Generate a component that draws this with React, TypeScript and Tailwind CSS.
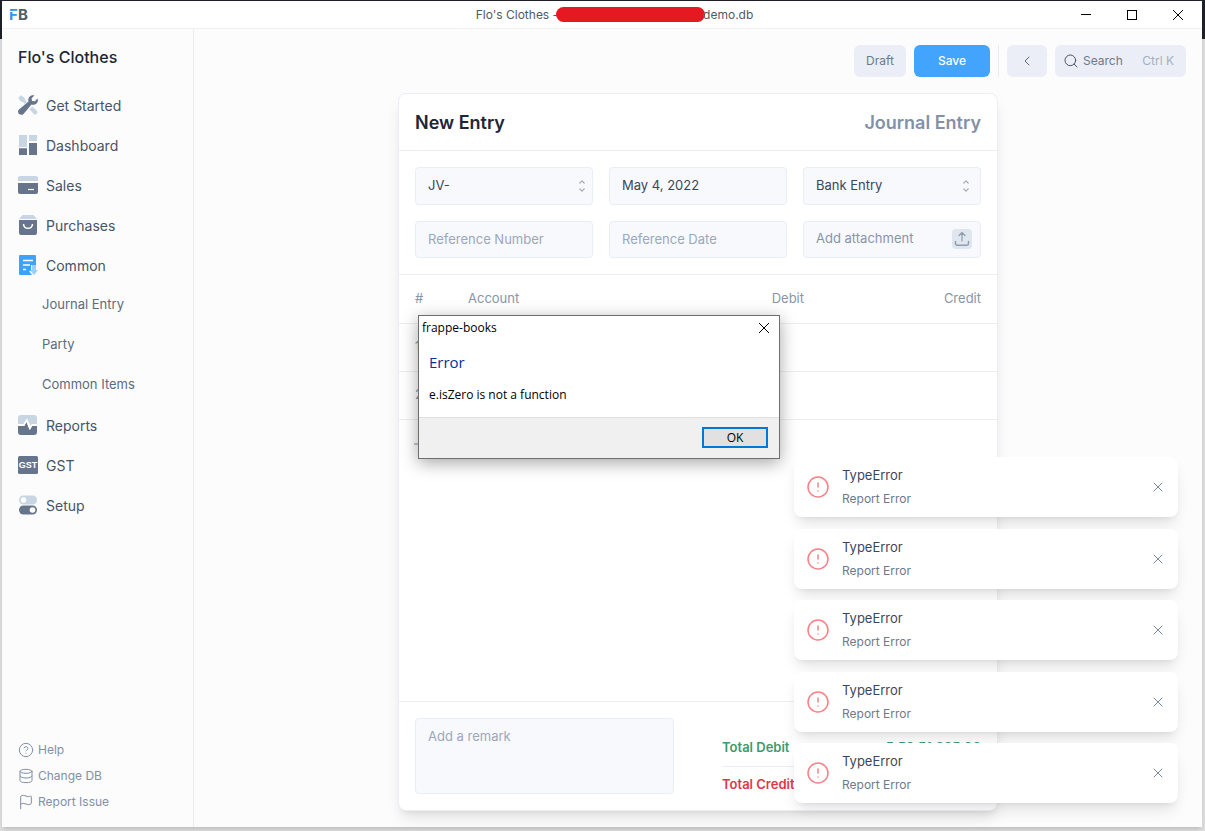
import React from 'react';
import {
  ChevronLeft,
  CircleAlert,
  CircleQuestionMark,
  Database,
  Flag,
  Plus,
  Search,
  X,
} from 'lucide-react';

const DARK = '#66758b';
const LIGHT = '#c8d5e2';

function ToolsIcon() {
  return (
    <svg viewBox="0 0 20 20" className="w-5 h-5">
      <path d="M0.3 2.8 2.8 0.3 6.6 2.7 6.9 4.8 9 6.9 6.9 9 4.8 6.9 2.7 6.6z" fill={LIGHT} />
      <path d="M11.5 14.2 14.2 11.5 18.9 15.8a2.2 2.2 0 0 1-3.1 3.1z" fill={LIGHT} />
      <path
        d="M19.6 3.6 16.8 6.3 14 5.9 13.6 3.2 16.4 0.5C13.6-.4 10.2 1.6 10.3 5.2c0 .6.1 1 .2 1.4L1 14.4c-3 3 1.4 7.2 4.5 4.500L13.5 9.6c.6.2 1 .2 1.500.2 3.600 0 5.600-3.300 4.600-6.200z"
        fill={DARK}
      />
    </svg>
  );
}

function DashboardIcon() {
  return (
    <svg viewBox="0 0 20 20" className="w-5 h-5">
      <path d="M1 0h8v12H1zM11 0h8v6h-8z" fill={LIGHT} />
      <path d="M1 13.300h8V20H1zM11 8h8v12h-8z" fill={DARK} />
    </svg>
  );
}

function SalesIcon() {
  return (
    <svg viewBox="0 0 20 20" className="w-5 h-5">
      <path d="M2 1h16a2 2 0 0 1 2 2v3H0V3a2 2 0 0 1 2-2z" fill={LIGHT} />
      <path d="M0 8h20v9a2 2 0 0 1-2 2H2a2 2 0 0 1-2-2z" fill={DARK} />
      <path d="M10 14.500h6" stroke="#fff" strokeWidth="1.200" />
    </svg>
  );
}

function PurchasesIcon() {
  return (
    <svg viewBox="0 0 20 20" className="w-5 h-5">
      <path d="M4.500 0h11L19 4H1z" fill={LIGHT} />
      <path d="M1 5h18v13a2 2 0 0 1-2 2H3a2 2 0 0 1-2-2z" fill={DARK} />
      <path d="M5.500 9c.4 5.800 8.600 5.800 9 0" fill="none" stroke="#fff" strokeWidth="1.500" />
    </svg>
  );
}

function CommonIcon() {
  return (
    <svg viewBox="0 0 20 20" className="w-5 h-5">
      <path d="M2 0h15a1 1 0 0 1 1 1v9h-5v6h-2l3 4H2a1 1 0 0 1-1-1V1a1 1 0 0 1 1-1z" fill="#3ea2fb" />
      <path d="M5 5.500h10M5 10h7M5 14.500h3" stroke="#fff" strokeWidth="1.500" />
      <path d="M14 10h4v5h2l-4 5-4-5h2z" fill="#9acffb" />
    </svg>
  );
}

function ReportsIcon() {
  return (
    <svg viewBox="0 0 20 20" className="w-5 h-5">
      <path d="M3 0h13a3 3 0 0 1 3 3v6h-4.600l-1.900 1.500L9 3.500 5.500 9H0V3a3 3 0 0 1 3-3z" fill={LIGHT} />
      <path d="M0 11h6.300L8.500 7l3 8 2.600-4H19v6a3 3 0 0 1-3 3H3a3 3 0 0 1-3-3z" fill={DARK} />
      <path d="M0 10h6l2.500-5L12 13.500l2-3.500h5" fill="none" stroke="#fff" strokeWidth="1.300" />
    </svg>
  );
}

function GstIcon() {
  return (
    <svg viewBox="0 0 20 20" className="w-5 h-5">
      <rect y="1" width="20" height="18" rx="1.500" fill={DARK} />
      <text
        x="10"
        y="13"
        textAnchor="middle"
        fill="#fff"
        className="text-[9px] font-bold font-['Liberation_Sans_Narrow','Liberation_Sans',sans-serif]"
      >
        GST
      </text>
    </svg>
  );
}

function SetupIcon() {
  return (
    <svg viewBox="0 0 20 20" className="w-5 h-5">
      <rect x="1" y="0.500" width="18" height="9" rx="4.500" fill={LIGHT} />
      <circle cx="5.500" cy="5" r="2.800" fill="#fff" />
      <rect x="1" y="10.500" width="18" height="9" rx="4.500" fill={DARK} />
      <circle cx="14.500" cy="15" r="2.800" fill="#fff" />
    </svg>
  );
}

const navItems = [
  { label: 'Get Started', icon: <ToolsIcon /> },
  { label: 'Dashboard', icon: <DashboardIcon /> },
  { label: 'Sales', icon: <SalesIcon /> },
  { label: 'Purchases', icon: <PurchasesIcon /> },
  { label: 'Common', icon: <CommonIcon />, children: ['Journal Entry', 'Party', 'Common Items'] },
  { label: 'Reports', icon: <ReportsIcon /> },
  { label: 'GST', icon: <GstIcon /> },
  { label: 'Setup', icon: <SetupIcon /> },
];

const footerLinks = [
  { label: 'Help', Icon: CircleQuestionMark },
  { label: 'Change DB', Icon: Database },
  { label: 'Report Issue', Icon: Flag },
];

function TitleBar() {
  return (
    <header className="flex items-center h-7 shrink-0 bg-white border-b border-[#f0f1f4]">
      <div className="w-[164px] pl-1.5">
        <svg viewBox="0 0 24 24" className="w-6 h-6" role="img" aria-label="Frappe Books">
          <text x="1" y="17" fill="#2f95f3" className="text-[15px] font-bold font-[Inter,sans-serif]">F</text>
          <text x="10" y="17" fill="#505c68" className="text-[15px] font-bold font-[Inter,sans-serif]">B</text>
          <path d="M1 8.500h8.500" stroke="#fff" />
        </svg>
      </div>
      <div className="flex-1 flex items-center justify-center text-xs text-[#505a66]">
        <span>Flo's Clothes -</span>
        <span className="w-[149px] h-[15px] -mx-0.5 rounded-full bg-[#e61923]" />
        <span>demo.db</span>
      </div>
      <div className="flex mr-px">
        <button aria-label="Minimize" className="w-[46px] h-7 flex items-center justify-center">
          <span className="w-2.5 h-px bg-black" />
        </button>
        <button aria-label="Maximize" className="w-[46px] h-7 flex items-center justify-center">
          <span className="w-2.5 h-2.5 border border-black" />
        </button>
        <button aria-label="Close" className="w-[46px] h-7 flex items-center justify-center">
          <svg viewBox="0 0 10 10" className="w-2.5 h-2.5">
            <path d="M0 0l10 10M10 0L0 10" stroke="#000" />
          </svg>
        </button>
      </div>
    </header>
  );
}

function Sidebar() {
  return (
    <aside className="w-48 shrink-0 flex flex-col border-r border-[#ebecf0] text-[#475467]">
      <h2 className="px-4 pt-4 pb-[17px] text-base leading-6 font-medium text-[#1d2536]">Flo's Clothes</h2>
      <nav>
        {navItems.map((item) => (
          <React.Fragment key={item.label}>
            <a href="#" className="flex items-center gap-2 h-10 px-4 text-sm">
              <span className="pb-0.5">{item.icon}</span>
              <span>{item.label}</span>
            </a>
            {item.children?.map((child) => (
              <a key={child} href="#" className="flex items-center h-10 pl-10 pb-0.5 text-[13px] text-[#5d6b7e]">
                {child}
              </a>
            ))}
          </React.Fragment>
        ))}
      </nav>
      <div className="mt-auto px-4 pb-3">
        {footerLinks.map(({ label, Icon }) => (
          <a key={label} href="#" className="flex items-center gap-1 h-[26px] text-xs text-[#8190a5]">
            <Icon className="w-4 h-4" strokeWidth={1.5} />
            <span>{label}</span>
          </a>
        ))}
      </div>
    </aside>
  );
}

function Toolbar() {
  return (
    <div className="flex justify-end items-center gap-2 px-4 pt-4 text-xs text-[#6c7a8c]">
      <span className="h-8 px-3 flex items-center rounded-md bg-[#ebeef6]">Draft</span>
      <button className="h-8 px-6 rounded-md bg-[#42a4fc] text-white font-medium">Save</button>
      <div className="w-px h-8 bg-[#e8ebf1]" />
      <button aria-label="Back" className="w-10 h-8 flex items-center justify-center rounded-md bg-[#ebeef6] text-[#5c6a7d]">
        <ChevronLeft className="w-4 h-4" strokeWidth={1.5} />
      </button>
      <button className="w-[131px] h-8 pl-2 pr-3 flex items-center rounded-md bg-[#ebeef6]">
        <Search className="w-4 h-4 mr-1 text-[#475467]" strokeWidth={1.5} />
        <span>Search</span>
        <span className="ml-auto text-[#a3b0c2]">Ctrl K</span>
      </button>
    </div>
  );
}

const fieldClass =
  'w-full px-3 rounded-[4px] border border-[#e9edf5] bg-[#f7f9fd] text-[13px] text-[#3b475a] placeholder:text-[#9ba8bb] outline-none appearance-none';

function SelectField({ label, value, arrowClass }: { label: string; value: string; arrowClass: string }) {
  return (
    <div className="relative">
      <select aria-label={label} defaultValue={value} className={`${fieldClass} h-[38px]`}>
        <option>{value}</option>
      </select>
      <svg viewBox="0 0 6 12" className={`absolute top-3 w-1.5 h-3.5 text-[#a0adbf] pointer-events-none ${arrowClass}`}>
        <path d="M.8 3 3 .8 5.200 3M.8 9 3 11.200 5.200 9" fill="none" stroke="currentColor" strokeWidth="1.200" strokeLinecap="round" strokeLinejoin="round" />
      </svg>
    </div>
  );
}

function EntryForm() {
  return (
    <section className="w-[600px] flex-1 flex flex-col mx-auto mt-4 mb-4 bg-white border border-[#ebeef4] rounded-lg shadow-lg text-[13px]">
      <div className="flex items-center justify-between h-[57px] px-4 pt-0.5 border-b border-[#ebeef6] text-lg font-semibold">
        <h1 className="text-[#1d2536]">New Entry</h1>
        <h2 className="text-[#8291a8]">Journal Entry</h2>
      </div>

      {/* Entry fields */}
      <div className="grid grid-cols-3 gap-4 p-4 border-b border-[#ebeef6]">
        <SelectField label="Number series" value="JV-" arrowClass="right-2" />
        <input aria-label="Date" defaultValue="May 4, 2022" className={`${fieldClass} h-[38px] pb-0.5`} />
        <SelectField label="Entry type" value="Bank Entry" arrowClass="right-3" />
        <input aria-label="Reference Number" placeholder="Reference Number" className={`${fieldClass} h-[37px] pb-0.5`} />
        <input aria-label="Reference Date" placeholder="Reference Date" className={`${fieldClass} h-[37px] pb-0.5`} />
        <button className="w-full h-[37px] pl-3 pr-2 pb-0.5 flex items-center justify-between rounded-[4px] border border-[#e9edf5] bg-[#f7f9fd] text-[#8795a9]">
          <span>Add attachment</span>
          <span className="w-5 h-5 flex items-center justify-center rounded bg-[#dfe6ee]">
            <svg viewBox="0 0 16 16" className="w-4 h-4" fill="none" stroke="#8f9db1" strokeLinecap="round" strokeLinejoin="round">
              <path d="M8 10V1.800M5 4.500l3-3 3 3" strokeWidth="1.200" />
              <path d="M1.500 10.500v2a1.700 1.700 0 0 0 1.700 1.700h9.600a1.700 1.700 0 0 0 1.700-1.700v-2" strokeWidth="1.500" />
            </svg>
          </span>
        </button>
      </div>

      {/* Accounts */}
      <table className="w-full table-fixed text-[#8795a9]">
        <thead>
          <tr className="h-12 border-b border-[#ebeef6]">
            <th className="w-[69px] pl-4 text-left font-normal">#</th>
            <th className="text-left font-normal">Account</th>
            <th className="w-[162px] text-right font-normal">Debit</th>
            <th className="w-[193px] pr-4 text-right font-normal">Credit</th>
          </tr>
        </thead>
        <tbody>
          {[1, 2].map((n) => (
            <tr key={n} className="h-12 border-b border-[#ebeef6]">
              <td className="pl-4">{n}</td>
              <td />
              <td />
              <td />
            </tr>
          ))}
        </tbody>
      </table>
      <button className="h-12 pl-3 flex items-center gap-2 text-[#8795a9]">
        <Plus className="w-4 h-4" strokeWidth={1.5} />
        <span className="ml-7">Add Row</span>
      </button>

      {/* Remark and totals */}
      <div className="grid grid-cols-2 gap-12 mt-auto p-4 border-t border-[#ebeef6]">
        <textarea aria-label="Remark" placeholder="Add a remark" className={`${fieldClass} h-[76px] py-2 resize-none`} />
        <div className="flex flex-col justify-end leading-5 font-semibold">
          <div className="flex justify-between pb-[9px] border-b border-[#ebeef6] text-[#3d9b6c]">
            <span>Total Debit</span>
            <span>5,50,51,395.00</span>
          </div>
          <div className="flex justify-between pt-[7px] text-[#e0364a]">
            <span>Total Credit</span>
          </div>
        </div>
      </div>
    </section>
  );
}

function Toast() {
  return (
    <div className="flex items-center h-[60px] px-3 rounded-lg bg-white shadow-lg">
      <CircleAlert className="w-6 h-6 mr-3 text-[#f98086]" strokeWidth={1.5} />
      <div className="flex flex-col items-start gap-1 leading-5">
        <p className="text-[13px] text-[#3b475a]">TypeError</p>
        <button className="text-xs leading-5 text-[#6c7a8c]">Report Error</button>
      </div>
      <button aria-label="Dismiss" className="ml-auto text-[#7888a0]">
        <X className="w-4 h-4" strokeWidth={1.5} />
      </button>
    </div>
  );
}

function ErrorDialog() {
  return (
    <div
      role="dialog"
      aria-label="frappe-books"
      className="absolute left-[418px] top-[315px] w-[362px] bg-white border border-[#6e6e6e] shadow-[0_4px_16px_rgba(0,0,0,0.35)] text-xs text-black font-['Open_Sans','Noto_Sans',sans-serif]"
    >
      <div className="flex items-center justify-between h-6 pl-[3px] pr-2.5">
        <span>frappe-books</span>
        <button aria-label="Close dialog">
          <svg viewBox="0 0 10 10" className="w-2.5 h-2.5">
            <path d="M0 0l10 10M10 0L0 10" stroke="#000" />
          </svg>
        </button>
      </div>
      <div className="px-2.5 pt-2.5 pb-[13px]">
        <h3 className="text-[15px] leading-6 text-[#003399]">Error</h3>
        <p className="mt-3 leading-[18px]">e.isZero is not a function</p>
      </div>
      <div className="flex items-start justify-end h-[41px] pt-[9px] pr-[11px] bg-[#f0f0f0] border-t border-[#dfdfdf]">
        <button className="w-[66px] h-[21px] leading-4 bg-[#e1e1e1] border-2 border-[#0078d7]">OK</button>
      </div>
    </div>
  );
}

export default function App() {
  return (
    <div className="relative min-h-screen flex pt-px pl-[2px] pr-[3px] pb-1 bg-[linear-gradient(#1e2127_39px,#dedede_39px)] font-[Inter,sans-serif]">
      <div className="relative flex-1 flex flex-col bg-[#fcfcfc] shadow-md">
        <TitleBar />
        <div className="flex-1 flex">
          <Sidebar />
          <main className="flex-1 flex flex-col">
            <Toolbar />
            <EntryForm />
          </main>
        </div>
        <div className="absolute right-6 bottom-6 w-96 h-[346px] flex flex-col justify-between">
          {[1, 2, 3, 4, 5].map((id) => (
            <Toast key={id} />
          ))}
        </div>
      </div>
      <ErrorDialog />
    </div>
  );
}
